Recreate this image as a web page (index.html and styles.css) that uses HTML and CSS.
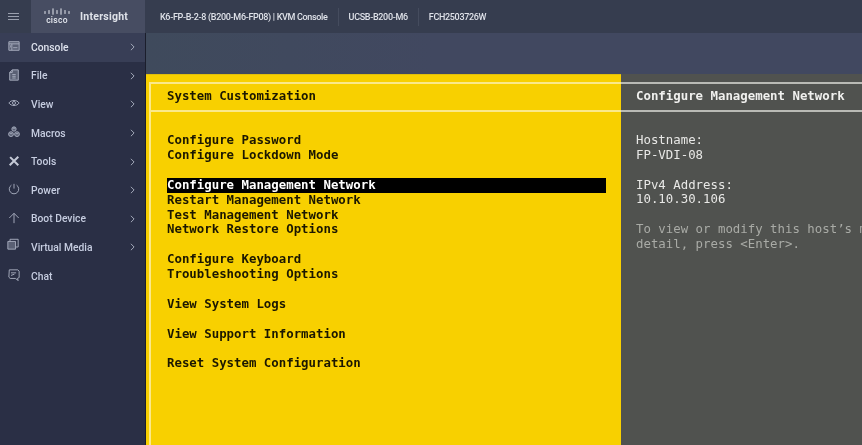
FILE: index.html
```html
<!DOCTYPE html>
<html lang="en">
<head>
<meta charset="utf-8">
<title>KVM Console</title>
<link rel="stylesheet" href="styles.css">
</head>
<body>
<header class="topbar">
  <div class="burger"><span></span><span></span><span></span></div>
  <div class="brand">
    <div class="logo">
      <svg width="26" height="8" viewBox="0 0 26 8"><g stroke="#e6e9f0" stroke-width="1" stroke-linecap="round"><path d="M1 3.500v2M5 2.500v3M9 .8v5.500M13 2.500v3M17 .8v5.500M21 2.500v3M25 3.500v2"/></g></svg>
      <span class="cisco">cisco</span>
    </div>
    <span class="brand-name">Intersight</span>
  </div>
  <div class="crumb">K6-FP-B-2-8 (B200-M6-FP08) | KVM Console</div>
  <div class="crumb">UCSB-B200-M6</div>
  <div class="crumb">FCH2503726W</div>
</header>
<div class="body">
  <nav class="sidebar">
    <a class="item active"><svg class="ico" viewBox="0 0 14 14"><path class="fill" d="M1 2h12v10H1z"/><path d="M1 2h12v10H1zM1 4.500h12M4.500 4.500V12M2 6l1.500 1.500L2 9M6 9h5"/></svg><span class="label">Console</span><svg class="chev" viewBox="0 0 6 10"><path d="M1 1l4 4-4 4"/></svg></a>
    <a class="item"><svg class="ico" viewBox="0 0 14 14"><path class="fill" d="M5 1h7v12H2V4z"/><path d="M5 1h7v12H2V4zM5 1v3H2M5 6.500h4M5 8.500h4M5 10.500h4"/></svg><span class="label">File</span><svg class="chev" viewBox="0 0 6 10"><path d="M1 1l4 4-4 4"/></svg></a>
    <a class="item"><svg class="ico" viewBox="0 0 14 14"><path d="M1 7c3-4 9-4 12 0-3 4-9 4-12 0z"/><circle cx="7" cy="7" r="1.800"/></svg><span class="label">View</span><svg class="chev" viewBox="0 0 6 10"><path d="M1 1l4 4-4 4"/></svg></a>
    <a class="item"><svg class="ico" viewBox="0 0 14 14"><circle class="fill" cx="7" cy="3.500" r="2.500"/><circle class="fill" cx="3.500" cy="9.500" r="2.800"/><circle class="fill" cx="10.500" cy="9.500" r="2.800"/><circle cx="7" cy="3.500" r="2.500"/><circle cx="3.500" cy="9.500" r="2.800"/><circle cx="10.500" cy="9.500" r="2.800"/><path d="M5.500 2.500h3M2 9h3M9 9h3"/></svg><span class="label">Macros</span><svg class="chev" viewBox="0 0 6 10"><path d="M1 1l4 4-4 4"/></svg></a>
    <a class="item"><svg class="ico" viewBox="0 0 14 14"><path class="thick" d="M2.500 2.500l9.500 9.500M12 2L2 12"/></svg><span class="label">Tools</span><svg class="chev" viewBox="0 0 6 10"><path d="M1 1l4 4-4 4"/></svg></a>
    <a class="item"><svg class="ico" viewBox="0 0 14 14"><path d="M7 1v5.500M4 2.500a5.500 5.500 0 1 0 6 0"/></svg><span class="label">Power</span><svg class="chev" viewBox="0 0 6 10"><path d="M1 1l4 4-4 4"/></svg></a>
    <a class="item"><svg class="ico" viewBox="0 0 14 14"><path d="M7 13V1.500M1.500 7L7 1.500 12.500 7"/></svg><span class="label">Boot Device</span><svg class="chev" viewBox="0 0 6 10"><path d="M1 1l4 4-4 4"/></svg></a>
    <a class="item"><svg class="ico ico-up" viewBox="0 0 14 14"><path class="fill" d="M1 4h9v9H1z"/><path d="M1 4h9v9H1zM3.500 4V1.500H13v9h-3"/></svg><span class="label">Virtual Media</span><svg class="chev" viewBox="0 0 6 10"><path d="M1 1l4 4-4 4"/></svg></a>
    <a class="item"><svg class="ico" viewBox="0 0 14 14"><path d="M1.500 1h10l1.500 1.500v7.500l-2 1 1 2.500-3.500-2.500H2.500L1 9.500zM3.500 4.500h6M3.500 7.500l4-1.500"/></svg><span class="label">Chat</span></a>
  </nav>
  <main class="main">
    <div class="stage">
      <section class="dcui-left">
        <h1 class="title">System Customization</h1>
        <ul class="menu">
          <li>Configure Password</li>
          <li>Configure Lockdown Mode</li>
          <li class="gap"><span class="selected">Configure Management Network</span></li>
          <li>Restart Management Network</li>
          <li>Test Management Network</li>
          <li>Network Restore Options</li>
          <li class="gap">Configure Keyboard</li>
          <li>Troubleshooting Options</li>
          <li class="gap">View System Logs</li>
          <li class="gap">View Support Information</li>
          <li class="gap">Reset System Configuration</li>
        </ul>
      </section>
      <section class="dcui-right">
        <h2 class="title">Configure Management Network</h2>
        <div class="info">
          <p>Hostname:<br>FP-VDI-08</p>
          <p>IPv4 Address:<br>10.10.30.106</p>
          <p class="muted">To view or modify this host’s management network settings in<br>detail, press &lt;Enter&gt;.</p>
        </div>
      </section>
    </div>
  </main>
</div>
</body>
</html>
```
FILE: styles.css
```css
* { box-sizing: border-box; }
html, body { margin: 0; height: 445px; overflow: hidden; }
body { background: #2a2f45; font-family: Roboto, "Liberation Sans", sans-serif; display: flex; flex-direction: column; }

.topbar { height: 33px; flex: none; display: flex; align-items: center; background: #363d4f; color: #e3e6ec; }
.burger { width: 31px; height: 33px; display: flex; flex-direction: column; justify-content: center; align-items: center; gap: 2px; padding-right: 4px; }
.burger span { width: 11px; height: 1px; background: #9aa0ae; }
.brand { width: 114px; height: 33px; display: flex; align-items: center; background: #474d62; padding-left: 13px; gap: 10px; }
.logo { display: flex; flex-direction: column; align-items: center; width: 26px; margin-top: -1px; }
.cisco { font-size: 8.500px; line-height: 8px; color: #e6e9f0; font-weight: 500; letter-spacing: .3px; }
.brand-name { font-size: 10.500px; font-weight: 700; letter-spacing: .25px; color: #dfe2e9; }
.crumb { font-size: 9px; letter-spacing: -.32px; font-weight: 500; padding: 0 10px; line-height: 18px; border-right: 1px solid #454c5e; color: #dfe2e9; white-space: nowrap; }
.crumb:nth-of-type(3) { padding-left: 15px; }
.crumb:last-child { border: 0; }

.body { flex: 1; display: flex; min-height: 0; }
.sidebar { width: 145px; flex: none; background: #2a2f45; display: flex; flex-direction: column; }
.item { height: 28.600px; display: flex; align-items: center; padding: 0 10px 0 8px; color: #c6cde0; font-size: 10.300px; font-weight: 500; }
.item.active { background: #383e56; color: #dde1ec; }
.ico { width: 12px; height: 12px; flex: none; fill: none; stroke: #a7adbe; stroke-width: 1.100; margin-top: -2px; }
.ico-up { margin-top: -6px; margin-left: -1px; margin-right: 1px; }
.ico .thick { stroke-width: 2.400; stroke: #c4c9d6; }
.ico .fill { fill: #5a6074; stroke: none; }
.label { flex: 1; padding-left: 11px; }
.chev { width: 5px; height: 8px; fill: none; stroke: #a7adbe; stroke-width: 1.200; }

.main { flex: 1; min-width: 0; background: linear-gradient(90deg, #3f4a5c, #414860 40%); padding-top: 41px; border-left: 1px solid #1b1e2c; }
.stage { height: 100%; display: grid; grid-template-columns: 475px 241px; font-family: "DejaVu Sans Mono", "Liberation Mono", monospace; font-size: 12.380px; line-height: 14.870px; overflow: hidden; }
.dcui-left { position: relative; background: #f8d000; color: #1b1700; border-top: 1px solid #e1bf0a; padding: 7px 0 0 3px; font-weight: 700; }
.dcui-left::before { content: ""; position: absolute; left: 3px; top: 7px; bottom: 0; width: 2px; background: #fbe98a; }
.dcui-right { background: #50524f; color: #e8e8e6; padding-top: 8px; }
.title { margin: 0; font: inherit; height: 30px; padding: 4px 0 0 18px; border-top: 2px solid #fbe98a; border-bottom: 2px solid #fbe98a; font-weight: 700; line-height: 16px; }
.dcui-right .title { border-color: #b9bab5; padding-left: 15px; color: #f0f0ee; }
.menu { list-style: none; margin: 0; padding: 21.200px 0 0 18px; white-space: nowrap; }
.menu .gap { margin-top: 14.870px; }
.selected { display: block; width: 439px; background: #000; color: #fff; }
.info { padding: 21px 0 0 15px; white-space: nowrap; }
.info p { margin: 0 0 14.870px; }
.info .muted { color: #a9aba6; }
.topbar, .sidebar, .stage { filter: blur(.3px); }
```
